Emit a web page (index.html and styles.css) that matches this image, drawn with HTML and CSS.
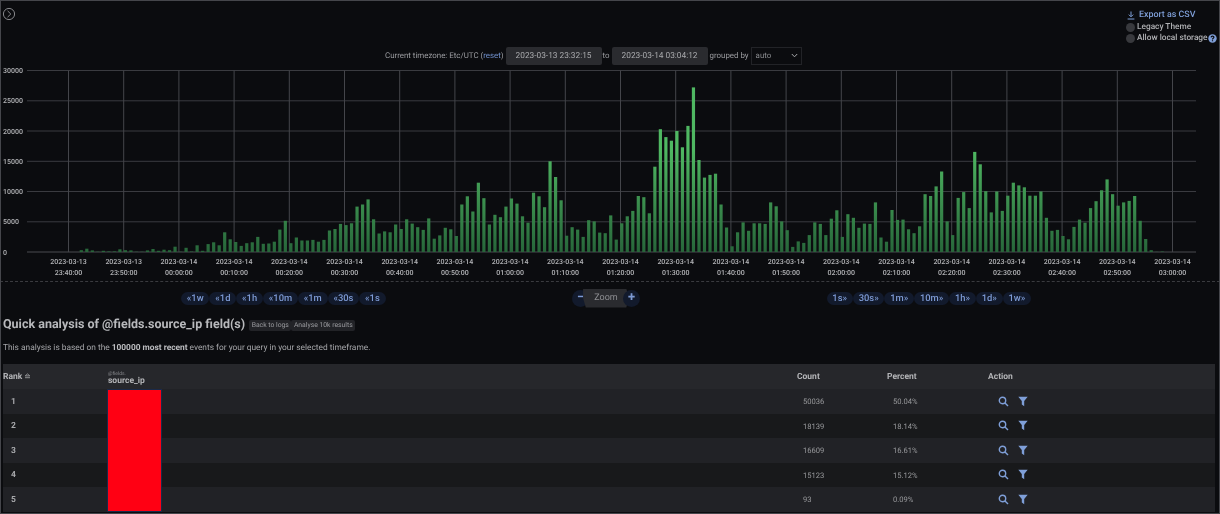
FILE: index.html
```html
<!DOCTYPE html>
<html lang="en">
<head>
<meta charset="utf-8">
<title>Quick analysis</title>
<link rel="stylesheet" href="styles.css">
</head>
<body>
<main class="page">
  <header class="topbar">
    <svg class="collapse" width="14" height="14" viewBox="0 0 14 14"><circle cx="7" cy="7" r="5.6"/><path d="M5.6 3.9 8.8 7 5.6 10.1"/></svg>
    <div class="options">
      <a class="export"><svg width="8" height="9" viewBox="0 0 8 9"><path d="M4 .5V5.5M1.8 3.6 4 5.8 6.2 3.6M.6 8H7.4"/></svg>Export as CSV</a>
      <div class="option"><span class="radio"></span>Legacy Theme</div>
      <div class="option"><span class="radio"></span>Allow local storage<svg class="help" width="9" height="9" viewBox="0 0 9 9"><circle cx="4.5" cy="4.5" r="4.2"/><path d="M3.1 3.4C3.2 1.7 5.9 1.8 5.9 3.3 5.9 4.3 4.5 4.3 4.5 5.4M4.5 6.2V7.2"/></svg></div>
    </div>
  </header>

  <section class="range">
    <span>Current timezone: Etc/UTC (<a class="link">reset</a>)</span>
    <div class="date-field">2023-03-13 23:32:15</div>
    <span class="to">to</span>
    <div class="date-field">2023-03-14 03:04:12</div>
    <span>grouped by</span>
    <div class="group-select"><span>auto</span><svg width="7" height="5" viewBox="0 0 7 5"><path d="M.8 1 3.5 3.8 6.2 1"/></svg></div>
  </section>

  <svg id="chart" class="chart" width="1220" height="215" viewBox="0 65 1220 215"></svg>
  <div class="divider"></div>

  <nav class="panbar">
    <div class="pills">
      <a class="pill"><i>«</i>1w</a><a class="pill"><i>«</i>1d</a><a class="pill"><i>«</i>1h</a><a class="pill"><i>«</i>10m</a><a class="pill"><i>«</i>1m</a><a class="pill"><i>«</i>30s</a><a class="pill"><i>«</i>1s</a>
    </div>
    <div class="zoom">
      <a class="round">−</a><span class="zoom-label">Zoom</span><a class="round">+</a>
    </div>
    <div class="pills">
      <a class="pill">1s<i>»</i></a><a class="pill">30s<i>»</i></a><a class="pill">1m<i>»</i></a><a class="pill">10m<i>»</i></a><a class="pill">1h<i>»</i></a><a class="pill">1d<i>»</i></a><a class="pill">1w<i>»</i></a>
    </div>
  </nav>

  <div class="title-row">
    <h1>Quick analysis of @fields.source_ip field(s)</h1>
    <a class="small-btn">Back to logs</a><a class="small-btn">Analyse 10k results</a>
  </div>
  <p class="note">This analysis is based on the <b>100000 most recent</b> events for your query in your selected timeframe.</p>

  <div class="table-wrap">
    <table>
      <thead>
        <tr>
          <th class="c-rank">Rank <svg width="7" height="6" viewBox="0 0 7 6"><path d="M1.2 2.9 3.5.9 5.8 2.9ZM1 4.7H6"/></svg></th>
          <th class="c-field"><small>@fields.</small><span>source_ip</span></th>
          <th class="c-count">Count</th>
          <th class="c-percent">Percent</th>
          <th class="c-action">Action</th>
        </tr>
      </thead>
      <tbody>
        <tr><td class="rank">1</td><td></td><td class="num">50036</td><td class="num">50.04%</td><td class="acts"><svg class="search" width="11" height="11" viewBox="0 0 11 11"><circle cx="4.5" cy="4.5" r="3.2"/><path d="M7 7 10 10"/></svg><svg class="funnel" width="10" height="11" viewBox="0 0 10 11"><path d="M.3 .8H9.7L6.2 5V10.2L3.8 8.6V5Z"/></svg></td></tr>
        <tr><td class="rank">2</td><td></td><td class="num">18139</td><td class="num">18.14%</td><td class="acts"><svg class="search" width="11" height="11" viewBox="0 0 11 11"><circle cx="4.5" cy="4.5" r="3.2"/><path d="M7 7 10 10"/></svg><svg class="funnel" width="10" height="11" viewBox="0 0 10 11"><path d="M.3 .8H9.7L6.2 5V10.2L3.8 8.6V5Z"/></svg></td></tr>
        <tr><td class="rank">3</td><td></td><td class="num">16609</td><td class="num">16.61%</td><td class="acts"><svg class="search" width="11" height="11" viewBox="0 0 11 11"><circle cx="4.5" cy="4.5" r="3.2"/><path d="M7 7 10 10"/></svg><svg class="funnel" width="10" height="11" viewBox="0 0 10 11"><path d="M.3 .8H9.7L6.2 5V10.2L3.8 8.6V5Z"/></svg></td></tr>
        <tr><td class="rank">4</td><td></td><td class="num">15123</td><td class="num">15.12%</td><td class="acts"><svg class="search" width="11" height="11" viewBox="0 0 11 11"><circle cx="4.5" cy="4.5" r="3.2"/><path d="M7 7 10 10"/></svg><svg class="funnel" width="10" height="11" viewBox="0 0 10 11"><path d="M.3 .8H9.7L6.2 5V10.2L3.8 8.6V5Z"/></svg></td></tr>
        <tr><td class="rank">5</td><td></td><td class="num">93</td><td class="num">0.09%</td><td class="acts"><svg class="search" width="11" height="11" viewBox="0 0 11 11"><circle cx="4.5" cy="4.5" r="3.2"/><path d="M7 7 10 10"/></svg><svg class="funnel" width="10" height="11" viewBox="0 0 10 11"><path d="M.3 .8H9.7L6.2 5V10.2L3.8 8.6V5Z"/></svg></td></tr>
      </tbody>
    </table>
    <div class="redaction"></div>
  </div>
</main>
<script src="chart.js"></script>
</body>
</html>
```
FILE: styles.css
```css
* { box-sizing: border-box; }
html, body { margin: 0; height: 100%; background: #0b0c0f; }
body { overflow: hidden; }
.page {
  width: 1220px;
  height: 514px;
  overflow: hidden;
  background: #0b0c0f;
  color: #a6a7aa;
  font-family: Roboto, "Liberation Sans", sans-serif;
  font-size: 7.9px;
  text-rendering: geometricPrecision;
  filter: blur(.35px);
  position: relative;
}
.page::after { content: ""; position: absolute; inset: 0; border: 1px solid #45464b; pointer-events: none; }
.topbar { height: 46px; display: flex; justify-content: space-between; align-items: flex-start; }
.collapse { margin: 7px 0 0 2px; }
.collapse circle, .collapse path { fill: none; stroke: #85868a; stroke-width: 1; }
.options { width: 92px; padding-top: 9px; display: flex; flex-direction: column; font-weight: 500; font-size: 8.3px; }
.export { height: 12.5px; line-height: 12px; color: #7f9fd8; font-size: 8.9px; display: flex; align-items: center; gap: 4px; margin-left: -1px; }
.export svg path { fill: none; stroke: #7f9fd8; stroke-width: 1; }
.option { height: 11.25px; line-height: 11.25px; display: flex; align-items: center; color: #b0b1b4; margin-left: -2px; }
.radio { width: 9px; height: 9px; border-radius: 50%; background: #38393d; margin-right: 2px; }
.help { margin-left: 0; }
.help circle { fill: #7f9fd8; }
.help path { fill: none; stroke: #0b0c0f; stroke-width: 1.2; }

.range { height: 19px; display: flex; align-items: center; padding-left: 385px; white-space: nowrap; color: #9c9da1; }
.link { color: #6f8fcb; }
.date-field { width: 96px; height: 18px; margin: 0 2px; background: #2a2b2f; border-radius: 2px; text-align: center; line-height: 18px; color: #a9aaad; font-size: 8.3px; }
.to { margin: 0 0 0 -1px; }
.group-select { width: 51px; height: 18px; margin-left: 2px; border: 1px solid #222327; display: flex; justify-content: space-between; align-items: center; padding: 0 3px 0 4px; color: #8a8b8f; }
.group-select svg path { fill: none; stroke: #a6a7aa; stroke-width: 1; }

.chart { display: block; }
.chart .grid-h { stroke: #3a3b40; stroke-width: 1; }
.chart .grid-v { stroke: #44454a; stroke-width: 1; }
.chart .axis { stroke: #4a4b50; stroke-width: 1; }
.chart text { font-family: Roboto, "Liberation Sans", sans-serif; font-size: 7px; fill: #b4b5b8; font-weight: 500; }

.divider { height: 0; margin-top: 1px; border-top: 1px dashed #3a3b3f; }
.panbar { display: flex; align-items: center; gap: 186.5px; padding: 6px 0 0 181px; height: 26px; }
.pills { display: flex; }
.pill { height: 13px; line-height: 13px; padding: 0 5.8px; border-radius: 7px; background: #121a2c; color: #7d9ad4; font-size: 9.4px; font-weight: 500; white-space: nowrap; }
.pill i { font-style: normal; }
.zoom { display: flex; align-items: center; }
.round { width: 17px; height: 17px; border-radius: 50%; background: #121a2c; color: #7d9ad4; text-align: center; line-height: 16px; font-size: 13px; font-weight: 700; position: relative; }
.zoom-label { width: 46px; height: 19px; margin: 0 -6px; background: #2a2b2f; color: #8d8e92; font-size: 9px; line-height: 19px; text-align: center; clip-path: polygon(0 0, 94% 0, 100% 50%, 94% 100%, 6% 100%, 0 50%); }

.title-row { display: flex; align-items: center; padding: 9px 0 0 3px; height: 25px; }
h1 { margin: 0 4px 0 0; font-size: 12.5px; line-height: 16px; font-weight: 700; color: #b8b9bc; white-space: nowrap; }
.small-btn { height: 11px; line-height: 11px; padding: 0 2.5px; background: #222327; border-radius: 2px; color: #9a9b9f; font-size: 6.8px; white-space: nowrap; }
.note { margin: 0; padding: 9px 0 0 3px; height: 31px; line-height: 13px; font-size: 8.35px; color: #a6a7aa; }
.note b { color: #bdbec1; }

.table-wrap { position: relative; margin-left: 3px; width: 1212px; }
table { width: 100%; border-collapse: collapse; table-layout: fixed; }
th { height: 25px; background: #26272b; color: #b4b5b8; font-size: 8.5px; font-weight: 700; text-align: left; padding: 1px 0 0; vertical-align: middle; }
th svg path { fill: none; stroke: #a6a7aa; stroke-width: .8; }
.c-rank { width: 105px; }
.c-field { width: 689px; }
.c-count { width: 90px; }
.c-percent { width: 101px; }
.c-field small { display: block; font-size: 5px; line-height: 5px; font-weight: 400; color: #85868a; margin-top: 2px; }
.c-field span { display: block; line-height: 8px; }
td { height: 24.5px; padding: 1px 0 0; color: #97989b; font-size: 7.6px; vertical-align: middle; }
tbody tr:nth-child(odd) { background: #212226; }
tbody tr:nth-child(even) { background: #18191b; }
.rank { padding-left: 8px; font-weight: 700; color: #a6a7aa; font-size: 8.5px; }
.num { padding-left: 6px; }
.acts { padding: 0 0 0 10px; }
.acts svg { vertical-align: middle; }
.search { margin-right: 9px; }
.search circle, .search path { fill: none; stroke: #7f9fd8; stroke-width: 1.4; }
.funnel path { fill: #7f9fd8; }
.redaction { position: absolute; left: 104px; top: 25px; width: 55px; height: 123px; background: #ff0013; border: 1px solid #1a2a4a; }
```
FILE: chart.js
```js
var data = [300,550,270,50,200,100,100,450,300,270,50,50,270,500,200,380,300,880,50,700,80,1100,200,1300,1600,1100,3250,2100,1650,1000,1450,1600,2500,1350,1400,1700,3700,5150,1450,2400,1900,1900,2000,1700,2000,3550,3800,4650,4450,4750,7500,7850,8700,5400,3050,3400,3250,4550,3800,5400,4700,4100,3650,5550,2200,2750,4000,3750,2650,7850,9200,6700,11450,8900,4550,6150,5750,7500,8850,8000,5900,4850,9800,9200,7400,15000,12400,8550,2700,4100,3700,2500,5250,5050,3200,3100,
6050,2050,4750,5900,6800,9250,9050,6400,14100,20300,19000,18400,20000,17300,20850,27200,15200,12300,12750,12950,7850,4050,950,3250,4900,3500,4750,4750,4650,8200,7550,5050,3600,850,1750,1500,2800,4900,4650,2800,5500,6900,2500,6250,5650,4000,4700,4650,8200,2400,1700,6950,5300,5350,3750,3100,4250,9550,9250,10850,13300,5050,2800,8950,9900,7250,16550,14500,10050,6550,10000,6800,9300,11450,11000,10700,9300,9300,10000,5650,3500,3650,2650,2100,4150,5350,4850,7250,8400,10200,12000,9550,7650,8200,8450,9250,5150,2150,300,30,80];

var ticks = [["2023-03-13","23:40:00"],["2023-03-13","23:50:00"]];
["00:00:00","00:10:00","00:20:00","00:30:00","00:40:00","00:50:00","01:00:00","01:10:00","01:20:00","01:30:00","01:40:00","01:50:00","02:00:00","02:10:00","02:20:00","02:30:00","02:40:00","02:50:00","03:00:00"].forEach(function (t) {
  ticks.push(["2023-03-14", t]);
});

var Y0 = 252, PER = 181.5 / 30000, parts = [];
parts.push('<defs><linearGradient id="bar" gradientUnits="userSpaceOnUse" x1="0" y1="150" x2="0" y2="252"><stop offset="0" stop-color="#4fb862"/><stop offset="1" stop-color="#27663a"/></linearGradient></defs>');

for (var v = 0; v <= 30000; v += 5000) {
  var y = (Y0 - v * PER).toFixed(1);
  parts.push('<line class="' + (v ? 'grid-h' : 'axis') + '" x1="27" x2="1196" y1="' + y + '" y2="' + y + '"/>');
  parts.push('<text x="3" y="' + (+y + 2.5) + '">' + v + '</text>');
}
ticks.forEach(function (t, i) {
  var x = (68.5 + i * 55.2).toFixed(1);
  parts.push('<line class="grid-v" x1="' + x + '" x2="' + x + '" y1="70.5" y2="252"/>');
  parts.push('<text text-anchor="middle" x="' + x + '" y="264">' + t[0] + '</text>');
  parts.push('<text text-anchor="middle" x="' + x + '" y="275">' + t[1] + '</text>');
});
data.forEach(function (d, i) {
  var h = d * PER, x = 81.3 + i * 5.515 - 1.6;
  parts.push('<rect fill="url(#bar)" x="' + x.toFixed(2) + '" y="' + (Y0 - h).toFixed(1) + '" width="3.2" height="' + h.toFixed(1) + '"/>');
});
document.getElementById('chart').innerHTML = parts.join('');
```
